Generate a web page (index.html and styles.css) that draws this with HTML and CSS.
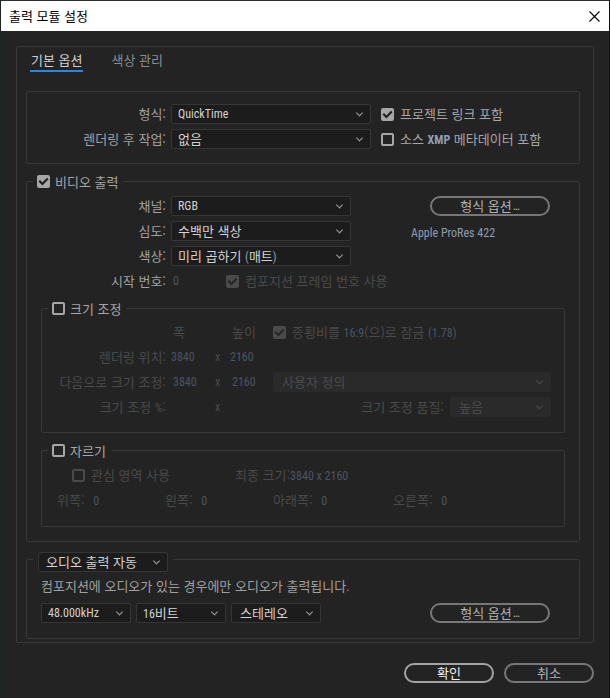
FILE: index.html
```html
<!DOCTYPE html>
<html lang="ko">
<head>
<meta charset="utf-8">
<title>출력 모듈 설정</title>
<link rel="stylesheet" href="styles.css">
</head>
<body>
<div class="window">
  <header class="titlebar">
    <span class="title">출력 모듈 설정</span>
    <svg class="close" width="11" height="11" viewBox="0 0 11 11"><path d="M0.5 0.5L10.5 10.5M10.5 0.5L0.5 10.5" stroke="#000" stroke-width="1.1" fill="none"/></svg>
  </header>
  <main class="content">
    <section class="panel">
      <nav class="tabs">
        <span class="tab active">기본 옵션</span>
        <span class="tab">색상 관리</span>
      </nav>

      <div class="box">
        <div class="fmt-grid">
          <span class="lbl">형식:</span>
          <div class="select"><span class="lat">QuickTime</span><i class="chev"></i></div>
          <label class="check side"><span class="cb on"><svg viewBox="0 0 13 13"><path d="M3 6.6l2.4 2.4L10 4.2"/></svg></span><span>프로젝트 링크 포함</span></label>
          <span class="lbl">렌더링 후 작업:</span>
          <div class="select"><span>없음</span><i class="chev"></i></div>
          <label class="check side"><span class="cb"></span><span>소스 <b class="xmp">XMP</b> 메타데이터 포함</span></label>
        </div>
      </div>

      <fieldset class="group video">
        <legend><span class="leg"><span class="cb on"><svg viewBox="0 0 13 13"><path d="M3 6.6l2.4 2.4L10 4.2"/></svg></span><span>비디오 출력</span></span></legend>
        <div class="vgrid">
          <span class="lbl">채널:</span>
          <div class="select"><span class="lat">RGB</span><i class="chev"></i></div>
          <div class="vside">
            <button class="btn wide">형식 옵션<span class="lat ell">…</span></button>
            <div class="codec lat">Apple ProRes 422</div>
          </div>
          <span class="lbl">심도:</span>
          <div class="select"><span>수백만 색상</span><i class="chev"></i></div>
          <span class="lbl">색상:</span>
          <div class="select"><span>미리 곱하기 <span class="lat paren">(</span>매트<span class="lat paren">)</span></span><i class="chev"></i></div>
          <span class="lbl">시작 번호:</span>
          <div class="startnum">
            <span class="num zero">0</span>
            <label class="check dis"><span class="cb on dis"><svg viewBox="0 0 13 13"><path d="M3 6.6l2.4 2.4L10 4.2"/></svg></span><span>컴포지션 프레임 번호 사용</span></label>
          </div>
        </div>

        <fieldset class="group sub">
          <legend><span class="leg"><span class="cb"></span><span>크기 조정</span></span></legend>
          <div class="sgrid">
            <span class="c2 pl7">폭</span>
            <span class="c4 pl2">높이</span>
            <label class="check dis c5"><span class="cb on dis"><svg viewBox="0 0 13 13"><path d="M3 6.6l2.4 2.4L10 4.2"/></svg></span><span>종횡비를 <span class="num">16:9</span>(으)로 잠금 <span class="num">(1.78)</span></span></label>

            <span class="lbl">렌더링 위치:</span>
            <span class="num pl5">3840</span>
            <span class="c3 lat">x</span>
            <span class="num c4">2160</span>

            <span class="lbl">다음으로 크기 조정:</span>
            <span class="num pl7">3840</span>
            <span class="c3 lat">x</span>
            <span class="num c4 pl2">2160</span>
            <div class="select dis c5"><span>사용자 정의</span><i class="chev"></i></div>

            <span class="lbl">크기 조정 <span class="lat">%</span>:</span>
            <span class="c3 lat">x</span>
            <div class="quality c5"><span>크기 조정 품질:</span><div class="select dis q"><span>높음</span><i class="chev"></i></div></div>
          </div>
        </fieldset>

        <fieldset class="group sub crop">
          <legend><span class="leg"><span class="cb"></span><span>자르기</span></span></legend>
          <div class="crop-body">
            <div class="crop-row">
              <label class="check dis roi"><span class="cb dis"></span><span>관심 영역 사용</span></label>
              <span>최종 크기:<span class="num">3840 x 2160</span></span>
            </div>
            <div class="crop-row edges">
              <span class="edge">위쪽: <span class="num">0</span></span>
              <span class="edge">왼쪽: <span class="num">0</span></span>
              <span class="edge wide">아래쪽: <span class="num">0</span></span>
              <span class="edge">오른쪽: <span class="num">0</span></span>
            </div>
          </div>
        </fieldset>
      </fieldset>

      <fieldset class="group audio">
        <legend><div class="select legsel"><span>오디오 출력 자동</span><i class="chev"></i></div></legend>
        <div class="audio-body">
          <p class="note">컴포지션에 오디오가 있는 경우에만 오디오가 출력됩니다<span class="lat dot">.</span></p>
          <div class="audio-row">
            <div class="select s90"><span class="lat">48.000kHz</span><i class="chev"></i></div>
            <div class="select s90"><span><span class="lat">16</span>비트</span><i class="chev"></i></div>
            <div class="select s90 st"><span>스테레오</span><i class="chev"></i></div>
            <button class="btn wide aopt">형식 옵션<span class="lat ell">…</span></button>
          </div>
        </div>
      </fieldset>
    </section>

    <div class="actions">
      <button class="btn primary">확인</button>
      <button class="btn">취소</button>
    </div>
  </main>
</div>
</body>
</html>
```

FILE: styles.css
```css
* { box-sizing: border-box; }
html, body { margin: 0; padding: 0; }
body {
  width: 610px;
  height: 698px;
  background: #232323;
  font-family: "Noto Sans CJK KR", "Noto Sans", sans-serif;
  font-size: 13px;
  line-height: 16px;
  color: #a0a0a0;
  overflow: hidden;
}
.window {
  width: 610px;
  height: 698px;
  border-right: 1px solid #0e0e0e;
  border-left: 1px solid #1c2426;
}
.titlebar {
  height: 31px;
  background: #fff;
  border-top: 1px solid #2e2e2e;
  display: flex;
  align-items: center;
  justify-content: space-between;
  padding: 0 9px 0 8px;
  color: #000;
  font-size: 13px;
}
.close { display: block; }
.content { padding: 15px 15px 0 15px; }
.panel {
  border: 1px solid #383838;
  border-radius: 2px;
  padding: 0 0 3px;
}
.tabs { display: flex; gap: 27px; margin: 5px 0 0 13px; }
.tab {
  padding: 0 1px 2px;
  border-bottom: 2px solid transparent;
  color: #8c8c8c;
}
.tab.active { color: #d0d0d0; border-bottom-color: #2b86e2; }

.box {
  margin: 19px 13px 0 9px;
  border: 1px solid #383838;
  border-radius: 2px;
  padding: 12px 0 14px;
}
.fmt-grid {
  display: grid;
  grid-template-columns: 139px 200px auto;
  column-gap: 5px;
  row-gap: 5px;
  grid-auto-rows: 20px;
  align-items: center;
}
.lbl { text-align: right; white-space: nowrap; }

.lat, .num {
  font-family: "Liberation Sans Narrow", "Roboto Condensed", "Liberation Sans", sans-serif;
  font-size: 12px;
}
.ell { margin-left: 1px; }
.paren { color: #8fa0b6; }
.dot { color: #8fa0b6; }

.select {
  height: 20px;
  background: #1c1c1c;
  border: 1px solid #353535;
  border-radius: 2px;
  display: flex;
  align-items: center;
  padding-left: 6px;
  color: #d2d2d2;
  white-space: nowrap;
}
.chev {
  flex: none;
  margin-left: auto;
  margin-right: 8px;
  width: 5px;
  height: 5px;
  border-right: 1px solid #a0a0a0;
  border-bottom: 1px solid #a0a0a0;
  transform: translateY(-1.5px) rotate(45deg);
}
.select.dis { background: #2a2a2a; border-color: #2a2a2a; color: #4a4a4a; }
.select.dis .chev { border-color: #4c4c4c; }

.check { display: flex; align-items: center; gap: 6px; white-space: nowrap; color: #a6a6a6; }
.check.side { margin-left: 5px; }
.check.dis { color: #4a4a4a; }
.cb {
  flex: none;
  width: 13px;
  height: 13px;
  border-radius: 2px;
  box-shadow: inset 0 0 0 2px #a6a6a6;
}
.cb svg { display: block; width: 13px; height: 13px; }
.cb svg path { fill: none; stroke: #1f1f1f; stroke-width: 2.1; stroke-linecap: square; }
.cb.on { background: #a6a6a6; box-shadow: none; }
.cb.dis { box-shadow: inset 0 0 0 2px #4a4a4a; }
.cb.on.dis { background: #4a4a4a; box-shadow: none; }
.cb.on.dis svg path { stroke: #262626; }

.xmp {
  font-family: "Liberation Sans Narrow", "Roboto Condensed", "Liberation Sans", sans-serif;
  font-size: 12px;
  font-weight: bold;
  color: #8fa0b6;
}
.num { color: #4b5462; }

.group {
  margin: 9px 13px 0 9px;
  padding: 0;
  border: 1px solid #383838;
  border-radius: 2px;
  min-width: 0;
}
.group > legend { margin-left: 6px; padding: 0 5px 0 4px; }
.leg { display: flex; align-items: center; gap: 5px; height: 17px; color: #a6a6a6; white-space: nowrap; }

.group.video { padding-bottom: 14px; }
.vgrid {
  display: grid;
  grid-template-columns: 139px 180px auto;
  column-gap: 5px;
  row-gap: 5px;
  grid-auto-rows: 20px;
  align-items: center;
  padding-top: 6px;
}
.vside { grid-column: 3; grid-row: span 3; align-self: start; }
.vside .btn { margin-left: 74px; }
.codec { margin: 9px 0 0 55px; color: #8f9db0; line-height: 16px; }
.startnum { display: flex; align-items: center; }
.zero { width: 55px; padding-left: 2px; flex: none; }

.btn {
  height: 20px;
  width: 90px;
  padding: 0;
  border: 2px solid #777;
  border-radius: 10px;
  background: transparent;
  color: #b2b2b2;
  font: inherit;
  line-height: 16px;
  display: flex;
  align-items: center;
  justify-content: center;
}
.btn.wide { width: 120px; }
.btn.primary { border-color: #a3a3a3; color: #f2f2f2; }

.group.sub { margin: 9px 14px 0 14px; color: #4a4a4a; }
.sgrid {
  display: grid;
  grid-template-columns: 124px 49px 15px 43px 278px;
  grid-auto-rows: 20px;
  row-gap: 5px;
  align-items: center;
  padding: 5px 0 15px;
  white-space: nowrap;
}
.sgrid .lbl { grid-column: 1; }
.c2 { grid-column: 2; }
.c3 { grid-column: 3; }
.c4 { grid-column: 4; }
.c5 { grid-column: 5; }
.pl2 { padding-left: 2px; }
.pl5 { padding-left: 5px; }
.pl7 { padding-left: 7px; }
.sgrid .select.dis { padding-left: 8px; }
.quality { display: flex; align-items: center; justify-content: flex-end; gap: 6px; }
.select.q { width: 101px; }

.crop-body { padding: 6px 0 16px; }
.crop-row { display: flex; align-items: center; height: 20px; white-space: nowrap; }
.crop-row + .crop-row { margin-top: 5px; }
.roi { width: 193px; padding-left: 30px; flex: none; }
.edges { padding-left: 15px; }
.edge { width: 108px; flex: none; }
.edge.wide { width: 120px; }
.edge .num { margin-left: 5px; }

.group.audio { margin-top: 5px; }
.group.audio > legend { padding: 5px 5px 0 5px; }
.legsel { width: 130px; padding-left: 7px; }
.audio-body { padding: 6px 0 15px 14px; }
.note { margin: 0 0 8px; color: #a0a0a0; white-space: nowrap; }
.audio-row { display: flex; align-items: center; gap: 5px; }
.s90 { width: 90px; }
.st { padding-left: 8px; }
.aopt { margin-left: 104px; }

.actions { display: flex; justify-content: flex-end; gap: 10px; margin-top: 20px; }
```
